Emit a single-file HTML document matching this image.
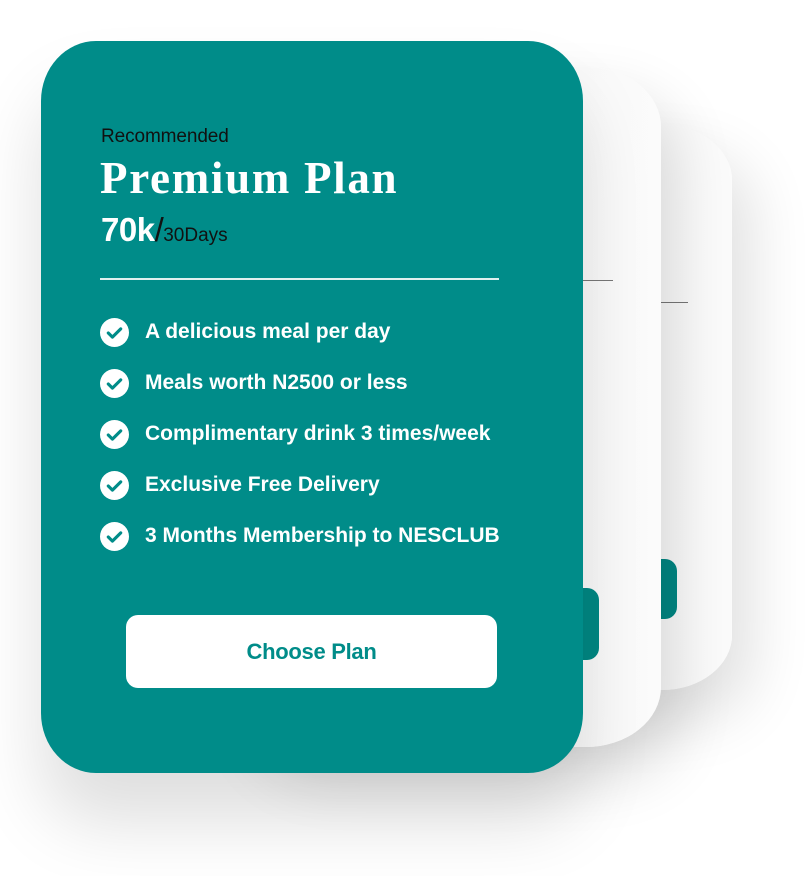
<!DOCTYPE html>
<html><head><style>
html,body{margin:0;padding:0;background:#fff;width:805px;height:876px;overflow:hidden;position:relative;font-family:"Liberation Sans",sans-serif}
.c{position:absolute}
.back{left:300px;top:125px;width:432px;height:565px;background:linear-gradient(90deg,#ececec,#fafafa 40%,#fbfbfb);border-radius:70px/55px;box-shadow:20px 30px 60px rgba(0,0,0,0.12)}
.mid{left:240px;top:67px;width:421px;height:680px;background:linear-gradient(90deg,#e6e6e6,#f8f8f8 70%,#fbfbfb);border-radius:75px/60px;box-shadow:15px 30px 60px rgba(0,0,0,0.14)}
.main{left:41px;top:41px;width:542px;height:732px;background:#008c89;border-radius:55px/60px;box-shadow:0 50px 70px rgba(0,0,0,0.13)}
.t{position:absolute;white-space:nowrap}
.li{position:absolute;left:100px;color:#fff;font-weight:bold;font-size:21px;letter-spacing:0;white-space:nowrap}
.li svg{position:absolute;left:0;top:-2px}
.li span{position:absolute;left:45px;top:0;white-space:nowrap}
</style></head><body>
<div class="c back"></div>
<div class="c" style="left:660px;top:302px;width:28px;height:1px;background:#777"></div>
<div class="c" style="left:640px;top:559px;width:37px;height:60px;background:#008783;border-radius:12px"></div>
<div class="c mid"></div>
<div class="c" style="left:560px;top:280px;width:53px;height:1px;background:#777"></div>
<div class="t" style="left:570px;top:414px;font-weight:bold;font-size:20px;color:#111">r</div>
<div class="t" style="left:566px;top:508px;font-weight:bold;font-size:20px;color:#111">3</div>
<div class="c" style="left:560px;top:588px;width:39px;height:72px;background:#008783;border-radius:12px"></div>
<div class="c main"></div>
<div class="t" style="left:101px;top:126px;font-size:19px;color:#111;letter-spacing:-0.1px">Recommended</div>
<div class="t" style="left:100px;top:152px;font-family:'Liberation Serif',serif;font-weight:bold;font-size:45px;color:#fff;letter-spacing:1.7px">Premium Plan</div>
<div class="t" style="left:101px;top:211px;font-size:33px;color:#fff;font-weight:bold;letter-spacing:-0.5px">70k<span style="color:#111;font-weight:normal">/</span><span style="color:#111;font-weight:normal;font-size:19px;letter-spacing:0">30Days</span></div>
<div class="c" style="left:100px;top:278px;width:399px;height:2px;background:#e0f0ef"></div>
<div class="li" style="top:320px"><svg width="29" height="29" viewBox="0 0 28 28"><circle cx="14" cy="14" r="14" fill="#fff"/><path d="M8 14.5l4 4 8-8" stroke="#008c89" stroke-width="3" fill="none" stroke-linecap="round" stroke-linejoin="round"/></svg><span>A delicious meal per day</span></div>
<div class="li" style="top:371px"><svg width="29" height="29" viewBox="0 0 28 28"><circle cx="14" cy="14" r="14" fill="#fff"/><path d="M8 14.5l4 4 8-8" stroke="#008c89" stroke-width="3" fill="none" stroke-linecap="round" stroke-linejoin="round"/></svg><span>Meals worth N2500 or less</span></div>
<div class="li" style="top:422px"><svg width="29" height="29" viewBox="0 0 28 28"><circle cx="14" cy="14" r="14" fill="#fff"/><path d="M8 14.5l4 4 8-8" stroke="#008c89" stroke-width="3" fill="none" stroke-linecap="round" stroke-linejoin="round"/></svg><span>Complimentary drink 3 times/week</span></div>
<div class="li" style="top:473px"><svg width="29" height="29" viewBox="0 0 28 28"><circle cx="14" cy="14" r="14" fill="#fff"/><path d="M8 14.5l4 4 8-8" stroke="#008c89" stroke-width="3" fill="none" stroke-linecap="round" stroke-linejoin="round"/></svg><span>Exclusive Free Delivery</span></div>
<div class="li" style="top:524px"><svg width="29" height="29" viewBox="0 0 28 28"><circle cx="14" cy="14" r="14" fill="#fff"/><path d="M8 14.5l4 4 8-8" stroke="#008c89" stroke-width="3" fill="none" stroke-linecap="round" stroke-linejoin="round"/></svg><span>3 Months Membership to NESCLUB</span></div>
<div class="c" style="left:126px;top:615px;width:371px;height:73px;background:#fff;border-radius:12px;color:#008c89;font-weight:bold;font-size:22px;text-align:center;line-height:73px;letter-spacing:-0.3px">Choose Plan</div>
</body></html>
